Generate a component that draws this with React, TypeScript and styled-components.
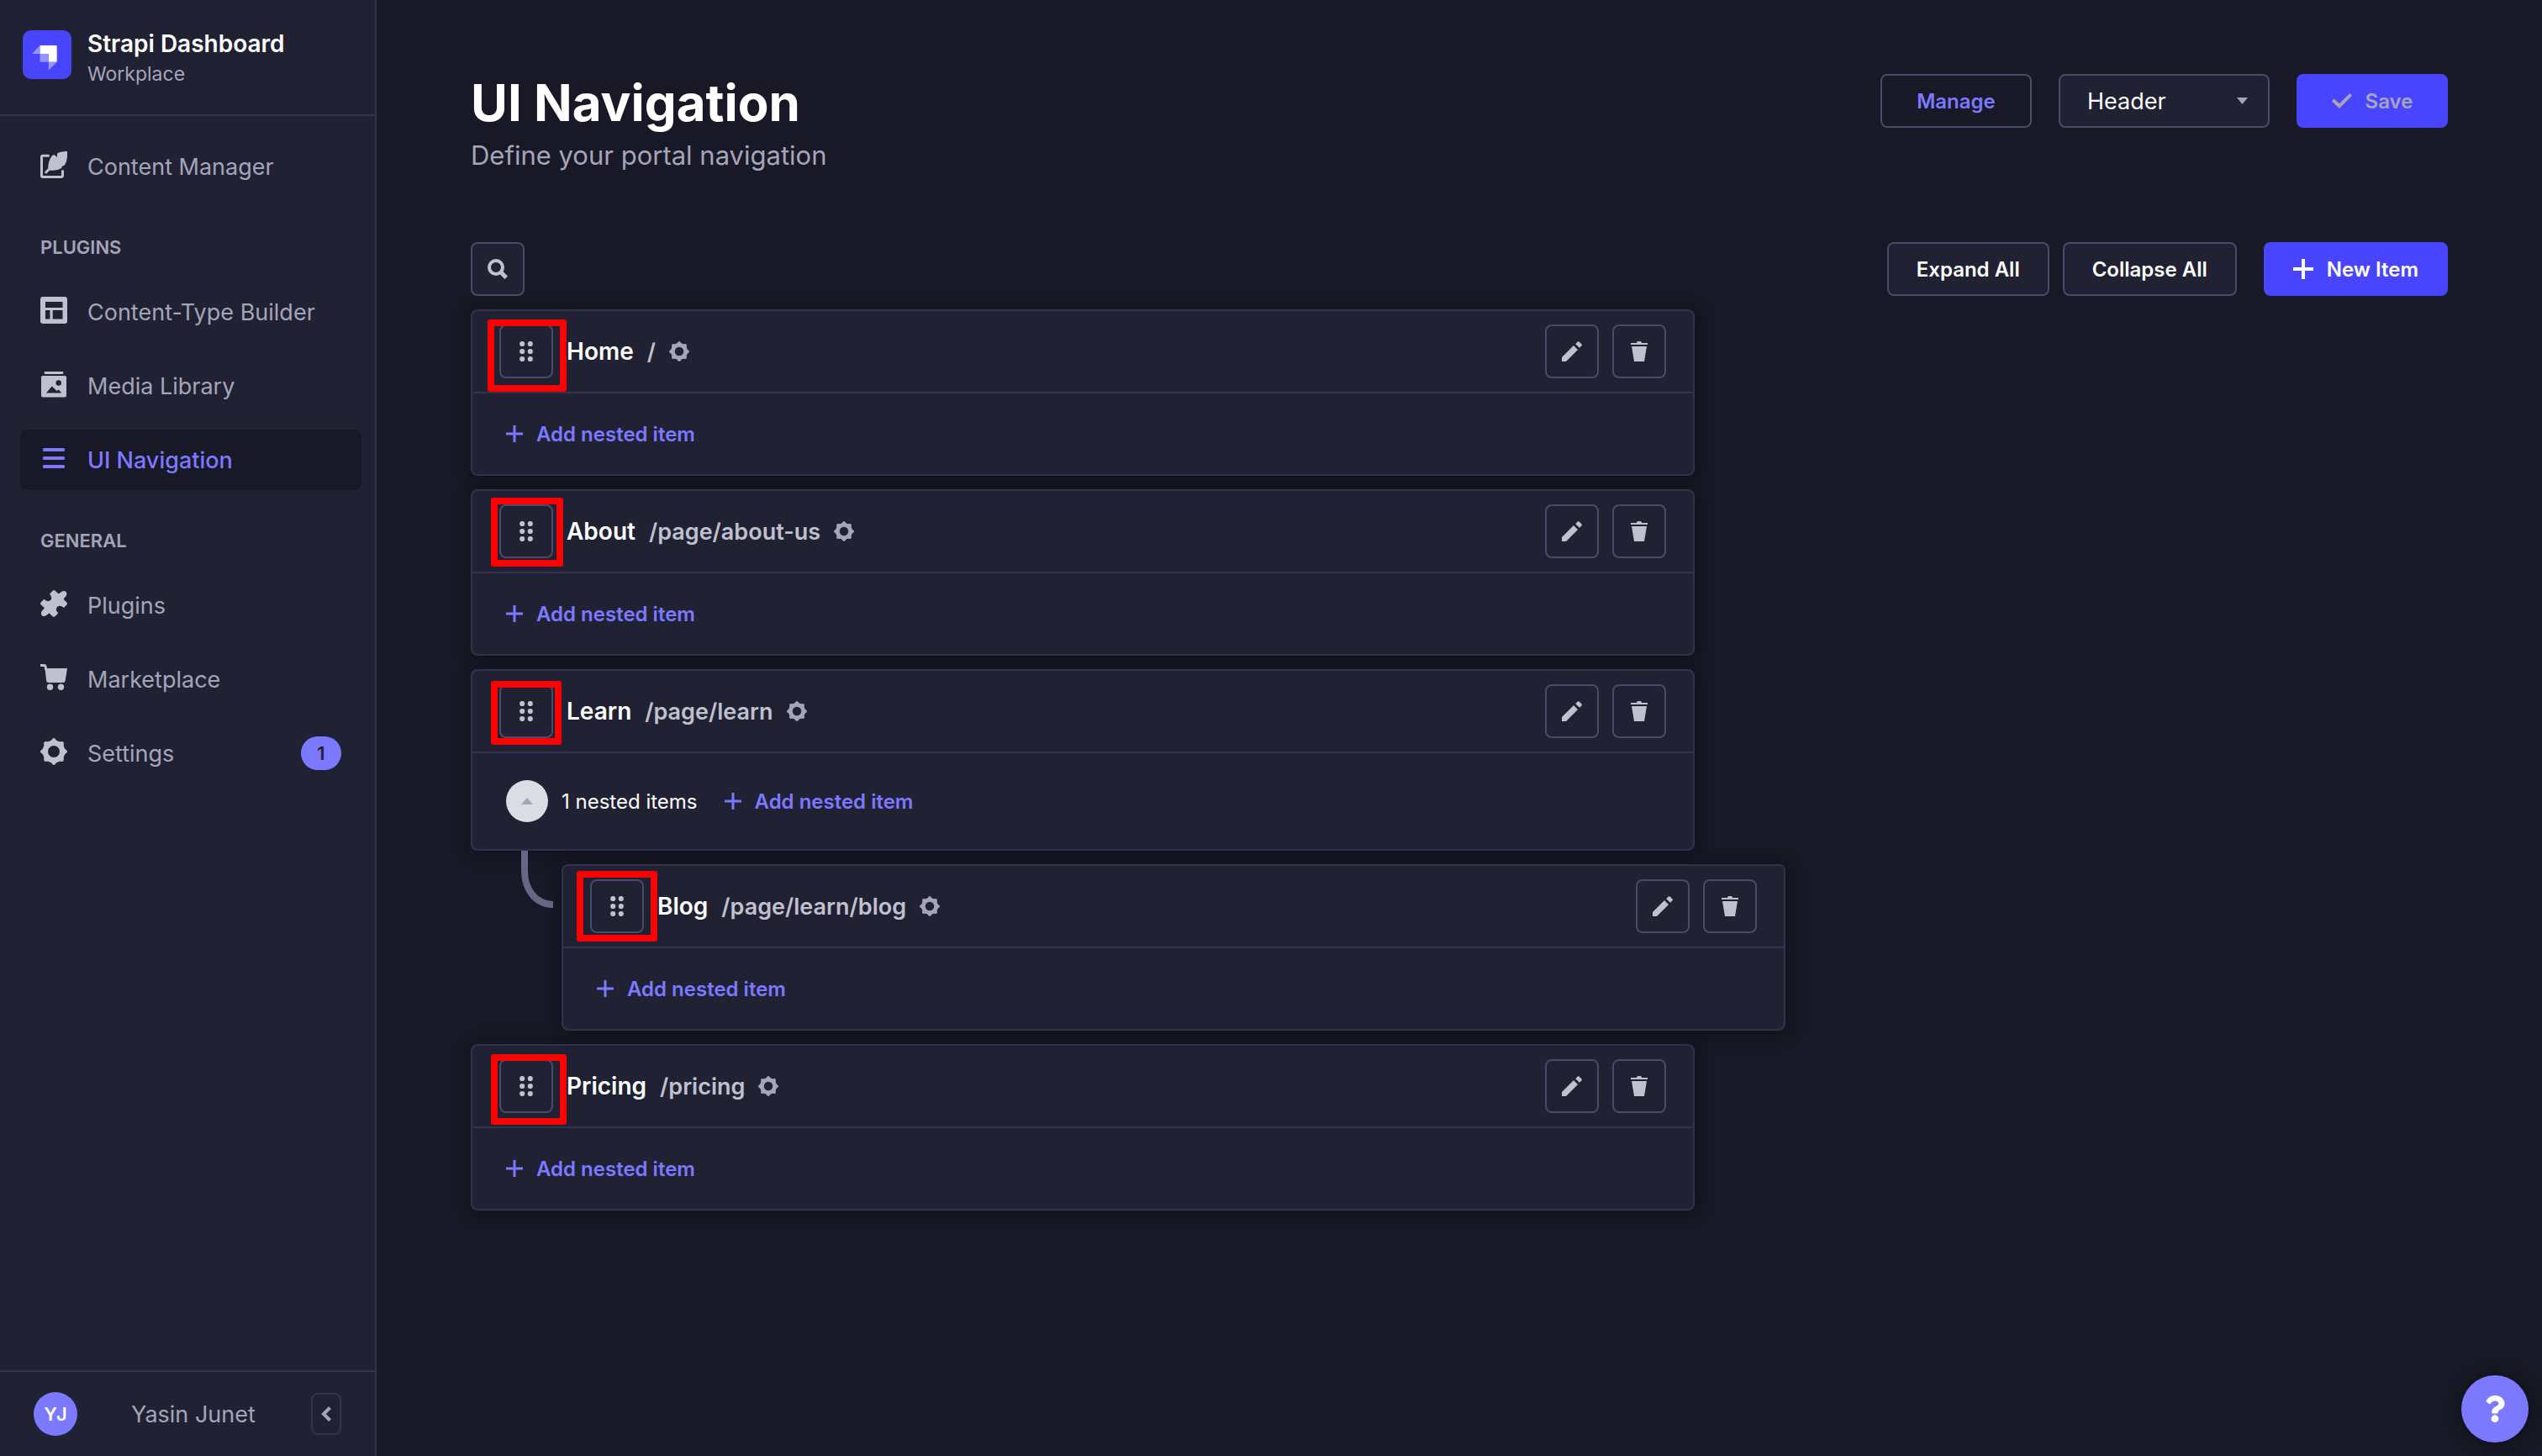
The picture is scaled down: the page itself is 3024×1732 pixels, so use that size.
import type { ReactNode } from "react";
import styled, { createGlobalStyle, css } from "styled-components";
import { FaQuestion } from "react-icons/fa";

const color = {
  page: "#181826",
  surface: "#212134",
  line: "#32324d",
  control: "#4a4a6a",
  connector: "#666687",
  muted: "#a5a5ba",
  icon: "#c0c0cf",
  accent: "#7b79ff",
  primary: "#4945ff",
  pale: "#dcdce4",
  text: "#ffffff",
  marker: "#ff0000",
};

const GlobalStyle = createGlobalStyle`
  *, *::before, *::after { box-sizing: border-box; }
  body {
    margin: 0;
    background: ${color.page};
    color: ${color.text};
    font-family: Inter, "Liberation Sans", sans-serif;
    -webkit-font-smoothing: antialiased;
  }
  button, select { font-family: inherit; }
  h1, h2, p, ul { margin: 0; padding: 0; }
  ul { list-style: none; }
  svg { display: block; flex: none; }
`;

/* ---------- layout ---------- */

const Shell = styled.div`
  display: grid;
  grid-template-columns: 448px minmax(0, 1fr);
  min-height: 100vh;
`;

const Sidebar = styled.aside`
  position: sticky;
  top: 0;
  display: flex;
  flex-direction: column;
  height: 100vh;
  background: ${color.surface};
  border-right: 2px solid ${color.line};
`;

const Brand = styled.div`
  display: flex;
  align-items: flex-start;
  gap: 19px;
  padding: 34px 27px 30px;
  border-bottom: 2px solid ${color.line};

  svg { margin-top: 2px; }
`;

const BrandName = styled.p`
  font-size: 28px;
  font-weight: 600;
  line-height: 36px;
`;

const BrandPlace = styled.p`
  color: ${color.muted};
  font-size: 23px;
  line-height: 36px;
`;

const Nav = styled.nav`
  flex: 1;
  padding: 24px 16px 24px 24px;
  overflow: auto;
`;

const NavHeading = styled.h2`
  padding: 44px 24px 25px;
  color: ${color.muted};
  font-size: 22px;
  font-weight: 600;
  line-height: 32px;
  text-transform: uppercase;
`;

const NavList = styled.ul`
  display: flex;
  flex-direction: column;
  gap: 16px;
`;

const NavLink = styled.a<{ $active?: boolean }>`
  display: flex;
  align-items: center;
  gap: 24px;
  height: 72px;
  padding: 0 24px;
  border-radius: 8px;
  color: ${color.muted};
  font-size: 27px;
  text-decoration: none;

  svg {
    margin-bottom: 4px;
    color: ${color.icon};
  }

  ${(p) =>
    p.$active &&
    css`
      background: ${color.page};
      color: ${color.accent};
      font-weight: 500;

      svg { color: ${color.accent}; }
    `}
`;

const Badge = styled.span`
  display: grid;
  place-items: center;
  width: 48px;
  height: 40px;
  margin-left: auto;
  border-radius: 20px;
  background: ${color.accent};
  color: ${color.surface};
  font-size: 22px;
  font-weight: 600;
`;

const UserBar = styled.div`
  display: flex;
  align-items: center;
  height: 102px;
  padding: 0 40px;
  border-top: 2px solid ${color.line};
`;

const Avatar = styled.span`
  display: grid;
  place-items: center;
  width: 52px;
  height: 52px;
  margin-right: 64px;
  border-radius: 50%;
  background: ${color.accent};
  font-size: 22px;
  font-weight: 600;
`;

const UserName = styled.span`
  color: ${color.muted};
  font-size: 27px;
`;

const CollapseButton = styled.button`
  display: grid;
  place-items: center;
  width: 36px;
  height: 50px;
  margin-left: auto;
  padding: 0;
  border: 2px solid ${color.line};
  border-radius: 8px;
  background: transparent;
  color: ${color.muted};
`;

const Main = styled.main`
  padding: 80px 112px;
`;

const PageHeader = styled.header`
  display: flex;
  justify-content: space-between;
  align-items: flex-start;
  padding-bottom: 82px;
`;

const Title = styled.h1`
  font-size: 60px;
  font-weight: 700;
  line-height: 84px;
`;

const Subtitle = styled.p`
  color: ${color.muted};
  font-size: 31px;
  line-height: 42px;
`;

const HeaderActions = styled.div`
  display: flex;
  gap: 32px;
  padding-top: 8px;
`;

const Toolbar = styled.div`
  display: flex;
  justify-content: space-between;
  padding-bottom: 16px;
`;

const ToolbarActions = styled.div`
  display: flex;
  gap: 32px;
`;

const ButtonPair = styled.div`
  display: flex;
  gap: 16px;
`;

/* ---------- controls ---------- */

type Look = "outline" | "surface" | "primary" | "spent";

const looks = {
  outline: css`
    border-color: ${color.control};
    background: transparent;
    color: ${color.accent};
  `,
  surface: css`
    border-color: ${color.control};
    background: ${color.surface};
    color: ${color.text};
  `,
  primary: css`
    border-color: ${color.primary};
    background: ${color.primary};
    color: ${color.text};
  `,
  spent: css`
    border-color: ${color.primary};
    background: ${color.primary};
    color: ${color.muted};
  `,
};

const Button = styled.button<{ $look: Look; $wide?: boolean }>`
  display: flex;
  align-items: center;
  justify-content: center;
  gap: 16px;
  height: 64px;
  min-width: ${(p) => (p.$wide ? 180 : 0)}px;
  padding: 0 ${(p) => (p.$wide ? 24 : 33)}px;
  border: 2px solid;
  border-radius: 8px;
  font-size: 24px;
  font-weight: 600;
  white-space: nowrap;
  ${(p) => looks[p.$look]}
`;

const IconButton = styled.button`
  display: grid;
  place-items: center;
  width: 64px;
  height: 64px;
  padding: 0;
  border: 2px solid ${color.control};
  border-radius: 8px;
  background: ${color.surface};
  color: ${color.icon};
`;

const SelectBox = styled.div`
  position: relative;
  width: 251px;

  svg {
    position: absolute;
    top: 28px;
    right: 26px;
    color: ${color.muted};
    pointer-events: none;
  }
`;

const Select = styled.select`
  width: 100%;
  height: 64px;
  padding: 0 56px 0 32px;
  border: 2px solid ${color.control};
  border-radius: 8px;
  background: ${color.surface};
  color: ${color.text};
  font-size: 27px;
  appearance: none;
`;

const TextButton = styled.button`
  display: flex;
  align-items: center;
  gap: 16px;
  height: 32px;
  padding: 0;
  border: 0;
  background: transparent;
  color: ${color.accent};
  font-size: 24px;
  font-weight: 600;
`;

/* ---------- items ---------- */

const ItemList = styled.ul<{ $nested?: boolean }>`
  display: flex;
  flex-direction: column;
  gap: 16px;
  width: 100%;
  max-width: 1456px;

  ${(p) =>
    p.$nested &&
    css`
      position: relative;
      margin: 16px 0 0 108px;
    `}
`;

const Connector = styled.svg`
  position: absolute;
  top: -16px;
  left: -48px;
  color: ${color.connector};
`;

const Card = styled.article`
  border: 2px solid ${color.line};
  border-radius: 8px;
  background: ${color.surface};
  box-shadow: 2px 2px 20px rgba(3, 3, 5, 0.35);
`;

const CardHead = styled.div`
  display: flex;
  align-items: center;
  gap: 16px;
  padding: 16px 32px;
  border-bottom: 2px solid ${color.line};
  font-size: 27px;
  font-weight: 600;

  > svg { color: ${color.muted}; }
`;

const ItemName = styled.h2`
  font-size: 28px;
  font-weight: inherit;
`;

const ItemPath = styled.span`
  color: ${color.icon};
`;

const CardActions = styled.div`
  display: flex;
  gap: 16px;
  margin-left: auto;
`;

const CardBody = styled.div`
  display: flex;
  align-items: center;
  padding: 32px 40px;
`;

const FoldButton = styled.button`
  display: grid;
  place-items: center;
  width: 50px;
  height: 50px;
  margin-right: 16px;
  padding: 0;
  border: 0;
  border-radius: 50%;
  background: ${color.pale};
  color: ${color.muted};
`;

const NestedCount = styled.span`
  margin-right: 32px;
  font-size: 24px;
`;

const HandleSlot = styled.div`
  position: relative;
`;

/* Hand-drawn frame around a drag handle: [left, top, width, height] */
type Frame = [number, number, number, number];

const Marker = styled.span<{ $frame: Frame }>`
  position: absolute;
  left: ${(p) => p.$frame[0]}px;
  top: ${(p) => p.$frame[1]}px;
  width: ${(p) => p.$frame[2]}px;
  height: ${(p) => p.$frame[3]}px;
  border: 8px solid ${color.marker};
  border-radius: 3px;
  pointer-events: none;
`;

const HelpButton = styled.button`
  position: fixed;
  right: 16px;
  bottom: 16px;
  display: grid;
  place-items: center;
  width: 80px;
  height: 80px;
  padding: 0;
  border: 0;
  border-radius: 50%;
  background: ${color.accent};
  color: ${color.text};
  box-shadow: 2px 2px 20px rgba(3, 3, 5, 0.35);
`;

/* ---------- icons ---------- */

type IconProps = { w: number; h?: number; children: ReactNode };

const Icon = ({ w, h = w, children }: IconProps) => (
  <svg width={w} height={h} viewBox={`0 0 ${w} ${h}`} fill="currentColor" aria-hidden="true">
    {children}
  </svg>
);

const Logo = () => (
  <svg width="58" height="58" viewBox="0 0 58 58" aria-hidden="true">
    <rect width="58" height="58" rx="10" fill="#4945ff" />
    <path d="M20.5 18h20.2v19.7h-10V28H20.5z" fill="#fff" />
    <path d="M20.5 28h10.2v9.7h-9.2a1 1 0 0 1-1-1z" fill="#9593ff" />
    <path d="M20.5 18v10h-9.300z M30.7 37.7h10l-10 10z" fill="#9593ff" />
  </svg>
);

const FeatherIcon = () => (
  <Icon w={32}>
    <path d="M9.5 5.3H3a1.5 1.5 0 0 0-1.5 1.5V29A1.5 1.5 0 0 0 3 30.5h22a1.5 1.5 0 0 0 1.5-1.5v-5.5" fill="none" stroke="currentColor" strokeWidth="3" strokeLinecap="round" />
    <path d="M32 0C26 .2 22.5 .7 20 2.7V7L17.2 4.5Q16 3.8 14.8 4.6C11.5 8 9.3 13 9.3 20.3L5.2 24.4Q5 26.6 7.3 26.4L11 22.8C17 22.8 22.5 22.5 26 19L25 18.2 28.6 16.8C31.5 13 32.4 7 32 0Z" />
  </Icon>
);

const LayoutIcon = () => (
  <Icon w={32}>
    <path fillRule="evenodd" d="M3 0H29a3 3 0 0 1 3 3V29a3 3 0 0 1-3 3H3a3 3 0 0 1-3-3V3a3 3 0 0 1 3-3ZM6 6V13H26.5V6ZM6 16V26.5H11.5V16ZM14.7 16V26.5H26.5V16Z" />
  </Icon>
);

const MediaIcon = () => (
  <Icon w={32}>
    <rect x="4.7" y="1" width="22.6" height="3" rx="1" />
    <path fillRule="evenodd" d="M3 6H29a2 2 0 0 1 2 2V29.5a2 2 0 0 1-2 2H3a2 2 0 0 1-2-2V8a2 2 0 0 1 2-2ZM18.5 14.5a3.2 3.2 0 1 0 6.4 0a3.2 3.2 0 1 0-6.4 0ZM7 26.5H25.3L21.7 22.5 19.7 24 13.7 18.5Z" />
  </Icon>
);

const MenuIcon = () => (
  <Icon w={32}>
    <path d="M4.7 6H27.3M4.7 16H27.3M4.7 26H27.3" stroke="currentColor" strokeWidth="4" strokeLinecap="round" />
  </Icon>
);

const PuzzleIcon = () => (
  <Icon w={32}>
    <path d="M11 4.5 15 .5Q16-.3 17.3 .5L21.5 4.3Q23 4 24 2.8Q27.5-.5 30.5 2Q32.8 5 29.5 8.3Q28 9.5 27.7 10.8L31.6 15Q32.4 16 31.6 17.3L28 21 26.3 19.8Q22.5 17.5 20 20Q17.6 23 20.2 26L21.2 27.6 17.2 31.5Q16 32.3 14.8 31.5L10.7 27.6Q9.3 28 8.3 29.3Q4.8 32.3 2 30.2Q-.5 27 2.8 23.7Q4.5 22.5 4.7 21L.4 17Q-.3 16 .4 14.8L4.5 10.8 6 12Q9.5 14.3 12.2 12Q14.3 9.3 12 6Z" />
  </Icon>
);

const CartIcon = () => (
  <Icon w={32}>
    <path d="M0 1.5H4.3Q5.8 1.5 6.1 3L6.8 7" fill="none" stroke="currentColor" strokeWidth="3" />
    <path d="M5.5 5H32L29.7 19.8Q29.3 22 27.3 22H9.5Q7.4 22 7.1 19.8Z" />
    <circle cx="11.5" cy="27.3" r="3.7" />
    <circle cx="24.5" cy="27.3" r="3.7" />
  </Icon>
);

const GearIcon = ({ size }: { size: number }) => (
  <svg width={size} height={size} viewBox="0 0 32 32" fill="currentColor" aria-hidden="true">
    <circle cx="16" cy="16" r="10.2" fill="none" stroke="currentColor" strokeWidth="6.4" />
    {[0, 45, 90, 135, 180, 225, 270, 315].map((turn) => (
      <path key={turn} d="M11.5 4.5 14.5 .7Q16-.6 17.5 .7L20.5 4.5Z" transform={`rotate(${turn} 16 16)`} />
    ))}
  </svg>
);

const ChevronLeftIcon = () => (
  <Icon w={12} h={18}>
    <path d="M10.5 1.5 3 9 10.5 16.5" fill="none" stroke="currentColor" strokeWidth="4" />
  </Icon>
);

const CheckIcon = () => (
  <Icon w={24} h={18}>
    <path d="M0 9.5 2.6 6.5 9 12.3 21.3 0 24 2.7 9 18Z" />
  </Icon>
);

const PlusIcon = ({ size, stroke }: { size: number; stroke: number }) => (
  <Icon w={size}>
    <path d={`M${size / 2} 0V${size}M0 ${size / 2}H${size}`} stroke="currentColor" strokeWidth={stroke} />
  </Icon>
);

const SearchIcon = () => (
  <Icon w={24}>
    <circle cx="10" cy="10" r="8" fill="none" stroke="currentColor" strokeWidth="4" />
    <path d="M15.5 15.5 22.3 22.3" stroke="currentColor" strokeWidth="5" />
  </Icon>
);

const CaretDownIcon = () => (
  <Icon w={13} h={8}>
    <path d="M0 0H13L6.5 8Z" />
  </Icon>
);

const CaretUpIcon = () => (
  <Icon w={14} h={8}>
    <path d="M0 8H14L7 0Z" />
  </Icon>
);

const DragIcon = () => (
  <Icon w={16} h={24}>
    {[3, 12, 21].map((y) => (
      <g key={y}>
        <circle cx="3.2" cy={y} r="3.1" />
        <circle cx="12.8" cy={y} r="3.1" />
      </g>
    ))}
  </Icon>
);

const PencilIcon = () => (
  <Icon w={24}>
    <path d="M14 5 19 10 5 24H0V19ZM18.8 .6Q19.7-.3 20.6 .6L23.5 3.5Q24.3 4.4 23.5 5.3L21 7.8 16.2 3.2Z" />
  </Icon>
);

const TrashIcon = () => (
  <Icon w={20} h={24}>
    <path d="M0 2H7Q7 0 8.5 0H11.5Q13 0 13 2H20V4H0ZM1 6H19L16 24H4Z" />
  </Icon>
);

/* ---------- page ---------- */

type NavEntry = { label: string; icon: ReactNode; active?: boolean; badge?: number };

const NavGroup = ({ entries }: { entries: NavEntry[] }) => (
  <NavList>
    {entries.map((e) => (
      <li key={e.label}>
        <NavLink href="#" $active={e.active} aria-current={e.active ? "page" : undefined}>
          {e.icon}
          {e.label}
          {e.badge && <Badge>{e.badge}</Badge>}
        </NavLink>
      </li>
    ))}
  </NavList>
);

type Item = { name: string; path: string; frame: Frame; children?: Item[] };

const items: Item[] = [
  { name: "Home", path: "/", frame: [-14, -6, 94, 86] },
  { name: "About", path: "/page/about-us", frame: [-10, -8, 86, 82] },
  {
    name: "Learn",
    path: "/page/learn",
    frame: [-10, -4, 84, 76],
    children: [{ name: "Blog", path: "/page/learn/blog", frame: [-16, -10, 96, 84] }],
  },
  { name: "Pricing", path: "/pricing", frame: [-10, -6, 90, 84] },
];

const NavigationItem = ({ item }: { item: Item }) => (
  <li>
    <Card>
      <CardHead>
        <HandleSlot>
          <IconButton aria-label={`Drag ${item.name}`}>
            <DragIcon />
          </IconButton>
          <Marker $frame={item.frame} />
        </HandleSlot>
        <ItemName>{item.name}</ItemName>
        <ItemPath>{item.path}</ItemPath>
        <GearIcon size={24} />
        <CardActions>
          <IconButton aria-label={`Edit ${item.name}`}>
            <PencilIcon />
          </IconButton>
          <IconButton aria-label={`Delete ${item.name}`}>
            <TrashIcon />
          </IconButton>
        </CardActions>
      </CardHead>
      <CardBody>
        {item.children && (
          <>
            <FoldButton aria-label="Collapse nested items">
              <CaretUpIcon />
            </FoldButton>
            <NestedCount>{item.children.length} nested items</NestedCount>
          </>
        )}
        <TextButton>
          <PlusIcon size={20} stroke={3} />
          Add nested item
        </TextButton>
      </CardBody>
    </Card>
    {item.children && (
      <ItemList $nested>
        <Connector width="38" height="68" viewBox="0 0 38 68" aria-hidden="true">
          <path d="M4 0V24C4 47 18 64 38 64" fill="none" stroke="currentColor" strokeWidth="8" />
        </Connector>
        {item.children.map((child) => (
          <NavigationItem key={child.name} item={child} />
        ))}
      </ItemList>
    )}
  </li>
);

export default function App() {
  return (
    <>
      <GlobalStyle />
      <Shell>
        <Sidebar>
          <Brand>
            <Logo />
            <div>
              <BrandName>Strapi Dashboard</BrandName>
              <BrandPlace>Workplace</BrandPlace>
            </div>
          </Brand>
          <Nav>
            <NavGroup entries={[{ label: "Content Manager", icon: <FeatherIcon /> }]} />
            <NavHeading>Plugins</NavHeading>
            <NavGroup
              entries={[
                { label: "Content-Type Builder", icon: <LayoutIcon /> },
                { label: "Media Library", icon: <MediaIcon /> },
                { label: "UI Navigation", icon: <MenuIcon />, active: true },
              ]}
            />
            <NavHeading>General</NavHeading>
            <NavGroup
              entries={[
                { label: "Plugins", icon: <PuzzleIcon /> },
                { label: "Marketplace", icon: <CartIcon /> },
                { label: "Settings", icon: <GearIcon size={32} />, badge: 1 },
              ]}
            />
          </Nav>
          <UserBar>
            <Avatar>YJ</Avatar>
            <UserName>Yasin Junet</UserName>
            <CollapseButton aria-label="Collapse the navbar">
              <ChevronLeftIcon />
            </CollapseButton>
          </UserBar>
        </Sidebar>

        <Main>
          <PageHeader>
            <div>
              <Title>UI Navigation</Title>
              <Subtitle>Define your portal navigation</Subtitle>
            </div>
            <HeaderActions>
              <Button $look="outline" $wide>Manage</Button>
              <SelectBox>
                <Select aria-label="Navigation" defaultValue="Header">
                  <option>Header</option>
                </Select>
                <CaretDownIcon />
              </SelectBox>
              <Button $look="spent" $wide disabled>
                <CheckIcon />
                Save
              </Button>
            </HeaderActions>
          </PageHeader>

          <Toolbar>
            <IconButton aria-label="Search">
              <SearchIcon />
            </IconButton>
            <ToolbarActions>
              <ButtonPair>
                <Button $look="surface">Expand All</Button>
                <Button $look="surface">Collapse All</Button>
              </ButtonPair>
              <Button $look="primary">
                <PlusIcon size={24} stroke={4} />
                New Item
              </Button>
            </ToolbarActions>
          </Toolbar>

          <ItemList>
            {items.map((item) => (
              <NavigationItem key={item.name} item={item} />
            ))}
          </ItemList>
        </Main>
      </Shell>
      <HelpButton aria-label="Help">
        <FaQuestion size={32} />
      </HelpButton>
    </>
  );
}
